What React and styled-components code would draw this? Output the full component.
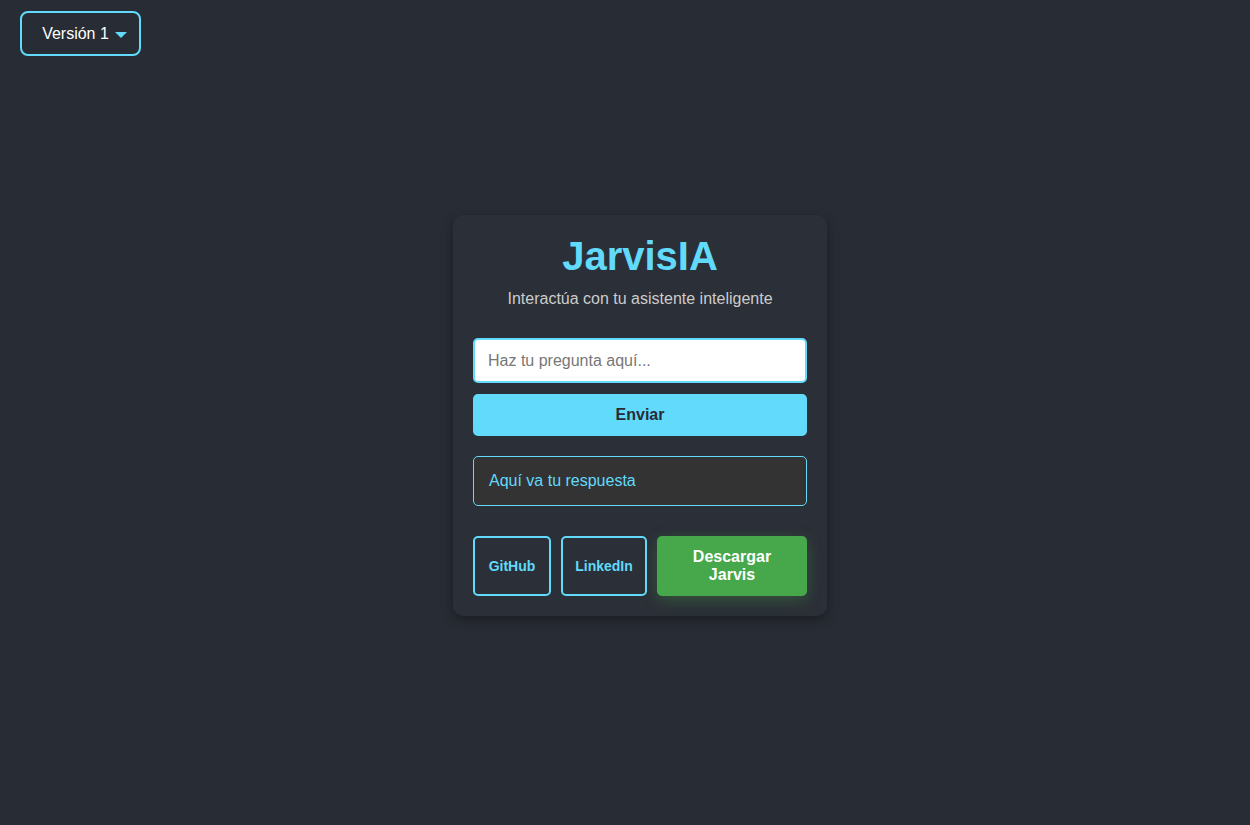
import React from "react";
import styled, { createGlobalStyle } from "styled-components";

const Global = createGlobalStyle`
  html, body { margin: 0; padding: 0; }
  body {
    background: #282c34;
    font-family: "Liberation Sans", Arial, sans-serif;
    color: #fff;
  }
  * { box-sizing: border-box; }
`;

const Page = styled.div`
  position: relative;
  width: 100%;
  height: 825px;
  display: flex;
  align-items: center;
  justify-content: center;
`;

const VersionWrap = styled.div`
  position: absolute;
  top: 11px;
  left: 20px;
`;

const VersionButton = styled.button`
  width: 121px;
  height: 45px;
  display: flex;
  align-items: center;
  justify-content: center;
  gap: 6px;
  padding: 0 0 0 8px;
  background: transparent;
  border: 2px solid #61dafb;
  border-radius: 8px;
  color: #fff;
  font-family: "Liberation Sans", Arial, sans-serif;
  font-size: 16px;
  cursor: pointer;
`;

const Caret = styled.span`
  width: 0;
  height: 0;
  border-left: 6px solid transparent;
  border-right: 6px solid transparent;
  border-top: 6px solid #61dafb;
  margin-top: 2px;
`;

const Card = styled.div`
  width: 374px;
  margin: 6px 0 0 30px;
  padding: 18px 20px 20px;
  background: #2b2f37;
  border-radius: 10px;
  box-shadow: 0 4px 12px rgba(0, 0, 0, 0.35);
  display: flex;
  flex-direction: column;
`;

const Title = styled.h1`
  margin: 0;
  text-align: center;
  color: #61dafb;
  font-size: 40px;
  font-weight: bold;
  line-height: 46px;
`;

const Subtitle = styled.p`
  margin: 11px 0 0;
  text-align: center;
  color: #ccc;
  font-size: 16px;
  line-height: 18px;
`;

const Input = styled.input`
  margin-top: 30px;
  width: 100%;
  height: 45px;
  padding: 0 13px;
  border: 2px solid #61dafb;
  border-radius: 5px;
  background: #fff;
  font-family: "Liberation Sans", Arial, sans-serif;
  font-size: 16px;
  color: #333;
  outline: none;
  &::placeholder { color: #777; }
`;

const SendButton = styled.button`
  margin-top: 11px;
  width: 100%;
  height: 42px;
  border: none;
  border-radius: 5px;
  background: #61dafb;
  color: #282c34;
  font-family: "Liberation Sans", Arial, sans-serif;
  font-size: 16px;
  font-weight: bold;
  cursor: pointer;
`;

const Response = styled.div`
  margin-top: 20px;
  height: 50px;
  padding: 0 15px;
  display: flex;
  align-items: center;
  background: #333;
  border: 1px solid #61dafb;
  border-radius: 5px;
  color: #61dafb;
  font-size: 16px;
`;

const Actions = styled.div`
  margin-top: 30px;
  display: flex;
  gap: 10px;
  height: 60px;
`;

const LinkButton = styled.a`
  width: ${(p) => p.$w}px;
  display: flex;
  align-items: center;
  justify-content: center;
  border: 2px solid #61dafb;
  border-radius: 5px;
  color: #61dafb;
  font-size: 14px;
  font-weight: bold;
  text-decoration: none;
`;

const DownloadButton = styled.button`
  flex: 1;
  border: none;
  border-radius: 5px;
  background: #46a84a;
  color: #fff;
  font-family: "Liberation Sans", Arial, sans-serif;
  font-size: 16px;
  font-weight: bold;
  line-height: 18px;
  padding: 0 30px;
  box-shadow: 0 4px 15px rgba(76, 175, 80, 0.3);
  cursor: pointer;
`;

export default function App() {
  return (
    <>
      <Global />
      <Page>
        <VersionWrap>
          <VersionButton>
            Versión 1 <Caret />
          </VersionButton>
        </VersionWrap>
        <Card>
          <Title>JarvisIA</Title>
          <Subtitle>Interactúa con tu asistente inteligente</Subtitle>
          <Input placeholder="Haz tu pregunta aquí..." />
          <SendButton>Enviar</SendButton>
          <Response>Aquí va tu respuesta</Response>
          <Actions>
            <LinkButton $w={78} href="#">GitHub</LinkButton>
            <LinkButton $w={86} href="#">LinkedIn</LinkButton>
            <DownloadButton>Descargar Jarvis</DownloadButton>
          </Actions>
        </Card>
      </Page>
    </>
  );
}
